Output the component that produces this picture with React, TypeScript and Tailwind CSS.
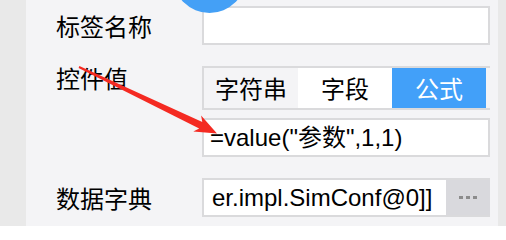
function Label({ children, className = '' }: { children: string; className?: string }) {
  return (
    <div className={`w-[146px] shrink-0 font-['Noto_Sans_CJK_SC',sans-serif] text-[24px] leading-[26px] text-black ${className}`}>
      {children}
    </div>
  )
}

export default function App() {
  const tabs = ['字符串', '字段', '公式']
  const active = 2

  return (
    <div className="relative flex h-[226px] w-[506px] overflow-hidden bg-[#e9e9e9] font-['Liberation_Sans','Noto_Sans_CJK_SC',sans-serif]">
      <div className="w-[26px] shrink-0 bg-[#e9e9e9]" />

      <main className="flex w-[472px] flex-col gap-[21px] bg-[#f4f4f6] pt-[6px] pl-[30px] pr-[8px]">
        <div className="flex items-center">
          <Label>标签名称</Label>
          <div className="h-[39px] w-[288px] border-2 border-[#dadadc] bg-white" />
        </div>

        <div className="flex items-start">
          <Label className="-mt-[1px]">控件值</Label>
          <div className="flex w-[288px] flex-col gap-[8px]">
            <div className="flex h-[44px] border-y-2 border-l-2 border-[#dadadc]">
              {tabs.map((t, i) => (
                <div
                  key={t}
                  className={`flex w-[94px] items-center justify-center font-['Noto_Sans_CJK_SC',sans-serif] text-[24px] ${
                    i === active
                      ? 'bg-[#42a0f9] text-white'
                      : i === 1
                        ? 'bg-white text-black'
                        : 'bg-[#f4f4f6] text-black'
                  }`}
                >
                  {t}
                </div>
              ))}
            </div>
            <div className="flex h-[39px] items-center border-2 border-[#dadadc] bg-white pl-[6px] text-[24px] text-black">
              =value("参数",1,1)
            </div>
          </div>
        </div>

        <div className="flex items-center">
          <Label>数据字典</Label>
          <div className="flex h-[39px] w-[288px] border-2 border-r-0 border-[#dadadc] bg-white">
            <div className="flex flex-1 items-center overflow-hidden whitespace-nowrap pl-[8px] text-[24px] text-black">
              er.impl.SimConf@0]]
            </div>
            <div className="flex w-[44px] items-center justify-center gap-[3px] bg-[#d9d9dd]">
              <span className="h-[3px] w-[4px] bg-[#8c8c8c]" />
              <span className="h-[3px] w-[4px] bg-[#8c8c8c]" />
              <span className="h-[3px] w-[4px] bg-[#8c8c8c]" />
            </div>
          </div>
        </div>
      </main>

      <div className="w-[8px] shrink-0 bg-[#e9e9e9]" />

      {/* floating blue handle */}
      <div className="absolute left-[173px] top-[-60px] h-[73px] w-[73px] rounded-full bg-[#44a0f6]" />

      {/* red annotation arrow */}
      <svg className="pointer-events-none absolute left-0 top-0" width="506" height="226" viewBox="0 0 506 226">
        <polygon
          points="78.6,67.9 199.2,128.4 193.3,131.6 217,133.5 201.1,115.4 202.3,122 79.4,66.1"
          fill="#f42a22"
        />
      </svg>
    </div>
  )
}
